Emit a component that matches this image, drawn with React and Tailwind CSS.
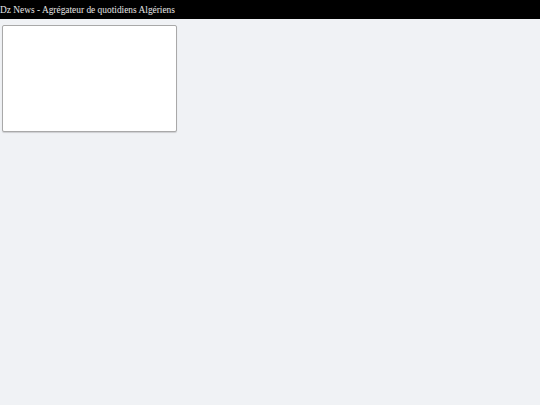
export default function App() {
  return (
    <div className="min-h-[405px] bg-[#f0f2f5] font-['Liberation_Serif',serif]">
      <header className="h-[19px] bg-black text-[#e5e5e5] text-[9.4px] leading-[20px] whitespace-nowrap">
        Dz News - Agrégateur de quotidiens Algériens
      </header>
      <div className="pt-[6px] pl-[2px]">
        <div className="w-[175px] h-[107px] bg-white border border-[#a9a9a9] rounded-[2px] shadow-[0_1px_1px_rgba(0,0,0,0.15)]" />
      </div>
    </div>
  );
}
